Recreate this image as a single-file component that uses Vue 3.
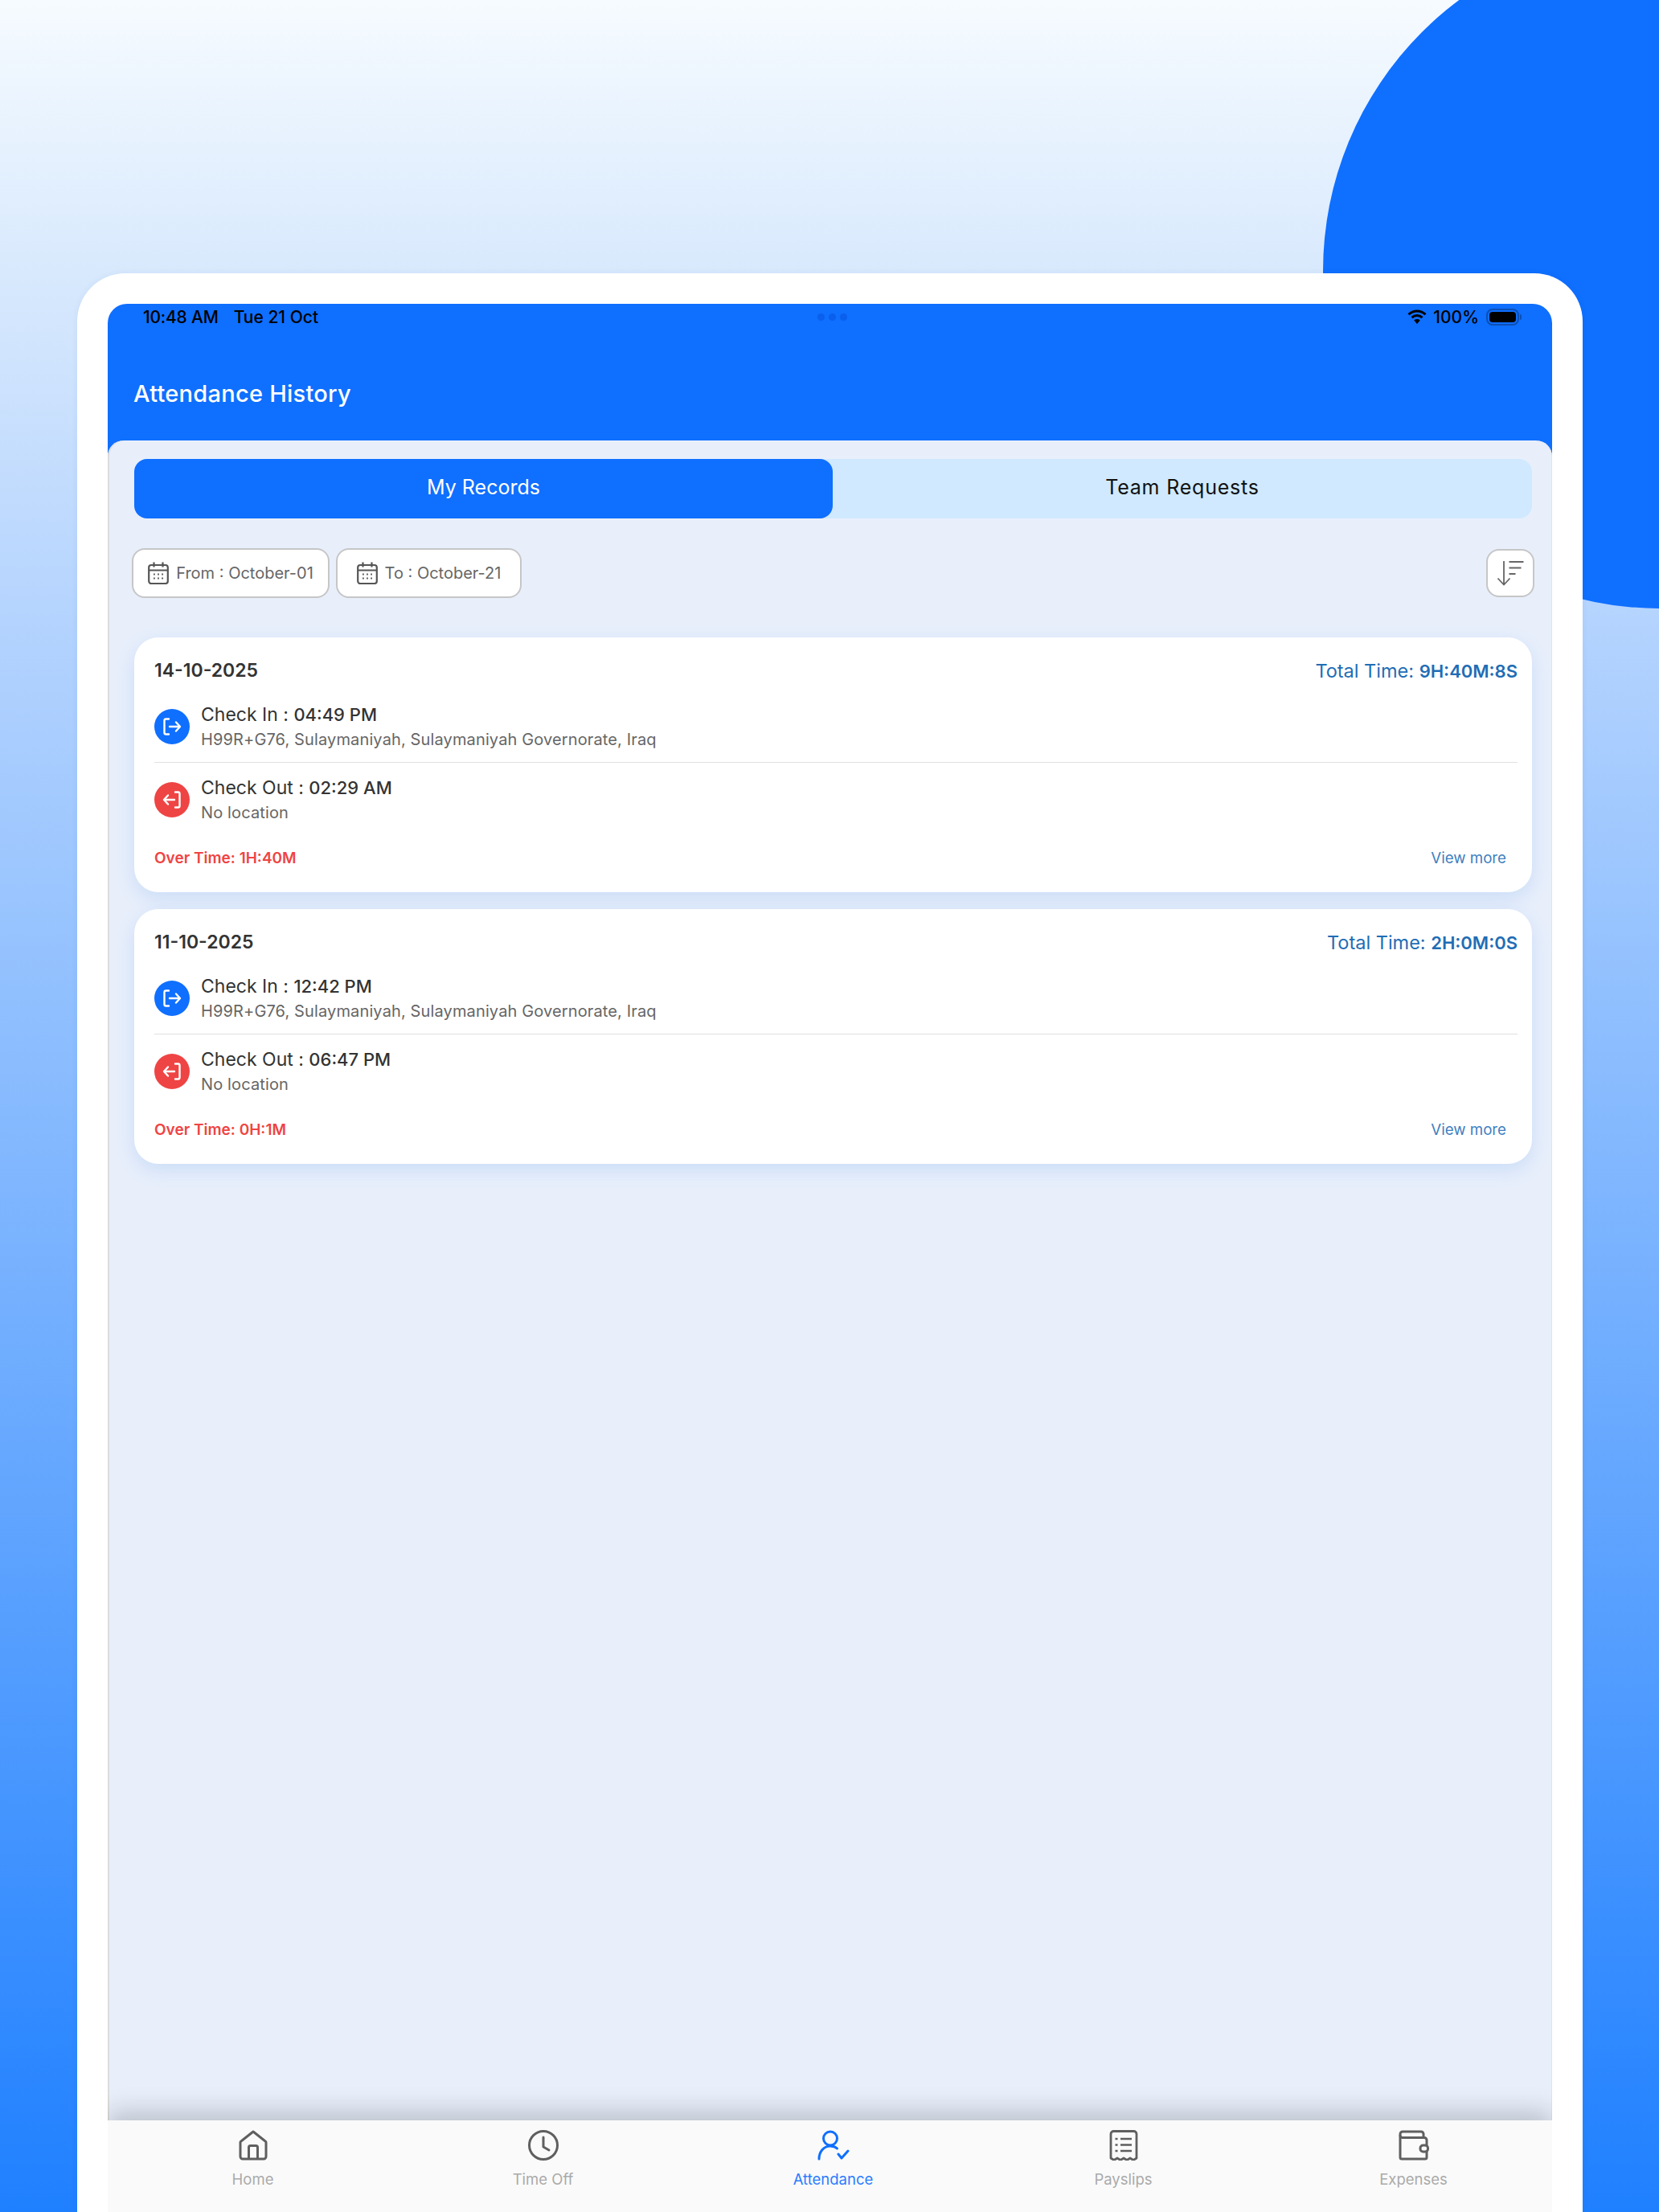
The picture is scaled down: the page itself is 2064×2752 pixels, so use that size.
<template>
  <div class="page">
    <div class="blob"></div>
    <div class="frame">
      <div class="screen">
        <div class="status">
          <span class="status__time">10:48 AM</span>
          <span class="status__date">Tue 21 Oct</span>
          <div class="status__dots"><i></i><i></i><i></i></div>
          <div class="status__right">
            <svg class="wifi" viewBox="0 0 24 20" width="24" height="20">
              <path d="M1.5 7.2a15 15 0 0 1 21 0" fill="none" stroke="#000" stroke-width="3" />
              <path d="M5.5 11.2a9.4 9.4 0 0 1 13 0" fill="none" stroke="#000" stroke-width="3" />
              <path d="M8.2 14.4 12 19l3.8-4.6a5.6 5.6 0 0 0-7.6 0z" fill="#000" />
            </svg>
            <span class="status__pct">100%</span>
            <div class="battery"><b></b></div>
            <div class="battery__nub"></div>
          </div>
        </div>
        <div class="header">Attendance History</div>

        <div class="sheet">
          <div class="tabs">
            <div class="tab tab--on">My Records</div>
            <div class="tab">Team Requests</div>
          </div>

          <div class="filters">
            <div v-for="f in filters" :key="f.label" class="chip" :class="f.cls">
              <svg viewBox="0 0 26 28" width="26" height="28" fill="none" stroke="#555" stroke-width="2.2">
                <rect x="1.2" y="4" width="23.6" height="23" rx="3" />
                <path d="M1.2 10.5h23.6M7.5 0.5v6M18.5 0.5v6" />
                <path d="M7 15.5h1.8M12.1 15.5h1.8M17.2 15.5h1.8M7 20.5h1.8M12.1 20.5h1.8M17.2 20.5h1.8" stroke-width="2" />
              </svg>
              <span>{{ f.label }}</span>
            </div>
            <div class="sort">
              <svg viewBox="0 0 34 32" width="34" height="32" fill="none" stroke="#666" stroke-width="1.8">
                <path d="M9 1v29M1.5 22.5 9 30.5l7.5-8" />
                <path d="M15.500 2h18M15.500 9.500h15M15.500 17h8" stroke-width="2" />
              </svg>
            </div>
          </div>

          <div v-for="r in records" :key="r.date" class="card">
            <div class="card__head">
              <span class="card__date">{{ r.date }}</span>
              <span class="card__total">Total Time: <b>{{ r.total }}</b></span>
            </div>

            <div class="row">
              <div class="dot dot--in">
                <svg viewBox="0 0 44 44" width="44" height="44" fill="none" stroke="#fff" stroke-width="2.4" stroke-linecap="round" stroke-linejoin="round">
                  <path d="M18 12.500h-3.500a2 2 0 0 0-2 2v15a2 2 0 0 0 2 2H18" />
                  <path d="M19 22h13M27 16.500l5 5.500-5 5.500" />
                </svg>
              </div>
              <div>
                <div class="row__title">Check In : <em>{{ r.checkIn }}</em></div>
                <div class="row__sub">H99R+G76, Sulaymaniyah, Sulaymaniyah Governorate, Iraq</div>
              </div>
            </div>

            <div class="line"></div>

            <div class="row">
              <div class="dot dot--out">
                <svg viewBox="0 0 44 44" width="44" height="44" fill="none" stroke="#fff" stroke-width="2.4" stroke-linecap="round" stroke-linejoin="round">
                  <path d="M26 12.500h3.500a2 2 0 0 1 2 2v15a2 2 0 0 1-2 2H26" />
                  <path d="M25 22H12M17 16.500 12 22l5 5.500" />
                </svg>
              </div>
              <div>
                <div class="row__title">Check Out : <em>{{ r.checkOut }}</em></div>
                <div class="row__sub">No location</div>
              </div>
            </div>

            <div class="card__foot">
              <span class="card__over">Over Time: {{ r.over }}</span>
              <span class="card__more">View more</span>
            </div>
          </div>
        </div>

        <div class="bar">
          <div class="bar__item">
            <svg viewBox="0 0 36 38" width="36" height="38" fill="none" stroke="#5f5f5f" stroke-width="3" stroke-linejoin="round">
              <path d="M18 2 3.500 13.500a3 3 0 0 0-1.500 3V33a3 3 0 0 0 3 3h26a3 3 0 0 0 3-3V16.500a3 3 0 0 0-1.500-3z" />
              <path d="M12.500 36V21.500a2 2 0 0 1 2-2h7a2 2 0 0 1 2 2V36" />
            </svg>
            <span>Home</span>
          </div>
          <div class="bar__item">
            <svg viewBox="0 0 38 38" width="38" height="38" fill="none" stroke="#5f5f5f" stroke-width="3" stroke-linecap="round" stroke-linejoin="round">
              <circle cx="19" cy="19" r="17.500" />
              <path d="M19 9v12l7 4" />
            </svg>
            <span>Time Off</span>
          </div>
          <div class="bar__item bar__item--on">
            <svg viewBox="0 0 40 38" width="40" height="38" fill="none" stroke="#0f6fff" stroke-width="3" stroke-linecap="round" stroke-linejoin="round">
              <circle cx="16" cy="10.500" r="8.500" />
              <path d="M2 36c0-8 5-16 14-16 3.500 0 6.500 1 8.500 3" />
              <path d="M26 30l4 5 8-9" />
            </svg>
            <span>Attendance</span>
          </div>
          <div class="bar__item">
            <svg viewBox="0 0 36 38" width="36" height="38" fill="none" stroke="#5f5f5f" stroke-width="2.800" stroke-linejoin="round">
              <path d="M2 35V5a3.500 3.500 0 0 1 3.500-3.500h25A3.500 3.500 0 0 1 34 5v30l-4 2.500-4-2.500-4 2.500-4-2.500-4 2.500-4-2.500-4 2.500z" />
              <path d="M7.500 11h3M14 11h14M7.500 18.500h3M14 18.500h14M7.500 26h3M14 26h14" stroke-width="2.600" />
            </svg>
            <span>Payslips</span>
          </div>
          <div class="bar__item">
            <svg viewBox="0 0 38 38" width="38" height="38" fill="none" stroke="#5f5f5f" stroke-width="3" stroke-linejoin="round">
              <path d="M31 9V5a3 3 0 0 0-3-3H5a3 3 0 0 0-3 3v29a2 2 0 0 0 2 2h29a2 2 0 0 0 2-2v-7" />
              <path d="M2 6.500a3 3 0 0 0 3 3h27a3 3 0 0 1 3 3V19" />
              <rect x="27" y="19" width="9.500" height="8" rx="3.500" />
            </svg>
            <span>Expenses</span>
          </div>
        </div>
      </div>
    </div>
  </div>
</template>

<script setup>
const filters = [
  { label: 'From : October-01', cls: 'chip--from' },
  { label: 'To : October-21', cls: 'chip--to' },
]

const records = [
  { date: '14-10-2025', total: '9H:40M:8S', checkIn: '04:49 PM', checkOut: '02:29 AM', over: '1H:40M' },
  { date: '11-10-2025', total: '2H:0M:0S', checkIn: '12:42 PM', checkOut: '06:47 PM', over: '0H:1M' },
]
</script>

<style>
html,
body {
  margin: 0;
  padding: 0;
}
</style>

<style scoped>
.page {
  position: relative;
  height: 2752px;
  padding: 340px 95px 0 96px;
  box-sizing: border-box;
  overflow: hidden;
  font-family: Inter, 'Noto Sans', sans-serif;
  background: linear-gradient(180deg, #f6fbff 0, #d8e9fd 340px, #b5d4fe 757px, #1f80ff 2752px);
}

.blob {
  position: absolute;
  left: 1646px;
  top: -83px;
  width: 840px;
  height: 840px;
  border-radius: 50%;
  background: #0f6fff;
}

.frame {
  position: relative;
  height: 2412px;
  padding: 38px 38px 0;
  box-sizing: border-box;
  background: #fff;
  border-radius: 60px 60px 0 0;
  box-shadow: 0 0 8px rgba(20, 60, 140, 0.06);
}

.screen {
  display: flex;
  flex-direction: column;
  height: 100%;
  background: #0f6fff;
  border-radius: 24px 24px 0 0;
  overflow: hidden;
}

.status {
  display: flex;
  align-items: center;
  position: relative;
  height: 32px;
  padding: 0 38px 0 44px;
  font-size: 21px;
  font-weight: 500;
  color: #000;
}

.status__time {
  letter-spacing: -0.2px;
}

.status__date {
  margin-left: 19px;
}

.status__dots {
  position: absolute;
  left: 883px;
  top: 12px;
  display: flex;
  gap: 5px;
}

.status__dots i {
  width: 9px;
  height: 9px;
  border-radius: 50%;
  background: #0a5fec;
}

.status__right {
  display: flex;
  align-items: center;
  margin-left: auto;
}

.status__pct {
  margin: 0 9px 0 8px;
}

.battery {
  width: 41px;
  height: 21px;
  padding: 2px;
  box-sizing: border-box;
  border: 2px solid #0c4fb4;
  border-radius: 8px;
}

.battery b {
  display: block;
  height: 100%;
  background: #000;
  border-radius: 4px;
}

.battery__nub {
  width: 2px;
  height: 7px;
  margin-left: 1px;
  background: #0c4fb4;
  border-radius: 0 2px 2px 0;
}

.header {
  height: 138px;
  padding: 60px 0 0 32px;
  box-sizing: border-box;
  font-size: 29px;
  line-height: 40px;
  font-weight: 500;
  letter-spacing: 0.25px;
  color: #fff;
}

.sheet {
  flex: 1;
  min-height: 0;
  padding: 23px 25px 0 33px;
  background: #e8effb;
  border-radius: 20px 20px 0 0;
  box-shadow: inset 2px 0 0 #dcdcdc, inset -1px 0 0 #e0e4ea;
}

.tabs {
  display: flex;
  height: 74px;
  background: #d0e9ff;
  border-radius: 16px;
}

.tab {
  flex: 1;
  display: flex;
  align-items: center;
  justify-content: center;
  padding-bottom: 4px;
  box-sizing: border-box;
  font-size: 25px;
  letter-spacing: 0.8px;
  color: #111;
}

.tab--on {
  flex: 0 0 869px;
  background: #0f6fff;
  border-radius: 16px;
  letter-spacing: 0;
  color: #fff;
}

.filters {
  display: flex;
  gap: 8px;
  margin: 37px -3px 49px -3px;
}

.chip {
  display: flex;
  align-items: center;
  justify-content: center;
  gap: 9px;
  height: 62px;
  box-sizing: border-box;
  background: #fff;
  border: 2px solid #c6c6c6;
  border-radius: 16px;
  font-size: 20px;
  color: #666;
}

.chip--from {
  width: 246px;
}

.chip--to {
  width: 231px;
}

.sort {
  display: flex;
  align-items: center;
  justify-content: center;
  width: 60px;
  height: 60px;
  margin: 1px 0 0 auto;
  box-sizing: border-box;
  background: #fff;
  border: 2px solid #c6c6c6;
  border-radius: 16px;
}

.card {
  height: 317px;
  margin-bottom: 21px;
  padding: 24px 18px 0 25px;
  box-sizing: border-box;
  background: #fff;
  border-radius: 30px;
  box-shadow: 0 8px 24px rgba(30, 110, 230, 0.14);
}

.card__head {
  display: flex;
  justify-content: space-between;
  align-items: center;
  height: 34px;
  margin-bottom: 22px;
}

.card__date {
  font-size: 23px;
  font-weight: 600;
  color: #333;
}

.card__total {
  font-size: 23.500px;
  color: #1f6db5;
}

.card__total b {
  font-size: 22px;
  font-weight: 600;
}

.row {
  display: flex;
  align-items: center;
  gap: 14px;
}

.dot {
  flex: none;
  width: 44px;
  height: 44px;
  border-radius: 50%;
}

.dot svg {
  display: block;
}

.dot--in {
  background: #0f6fff;
}

.dot--out {
  background: #ef4444;
}

.row__title {
  font-size: 23px;
  line-height: 32px;
  color: #333;
}

.row__title em {
  font-style: normal;
  font-size: 22px;
  font-weight: 500;
}

.row__sub {
  font-size: 20px;
  line-height: 30px;
  letter-spacing: 0.13px;
  color: #666;
}

.line {
  height: 1px;
  margin: 13px 0 15px;
  background: #e0e0e0;
}

.card__foot {
  display: flex;
  justify-content: space-between;
  align-items: center;
  height: 30px;
  margin-top: 26px;
  padding-right: 14px;
}

.card__over {
  font-size: 19px;
  font-weight: 600;
  color: #ef4444;
}

.card__more {
  font-size: 18.700px;
  color: #3f7fbf;
}

.bar {
  position: relative;
  display: grid;
  grid-template-columns: repeat(5, 361px);
  flex: none;
  height: 114px;
  background: #fafafa;
  box-shadow: 0 -10px 30px rgba(0, 0, 0, 0.2);
}

.bar__item {
  display: flex;
  flex-direction: column;
  align-items: center;
  padding-top: 12px;
  gap: 9px;
  font-size: 18.500px;
  line-height: 28px;
  color: #aaa;
}

.bar__item--on {
  color: #2a7dff;
}
</style>
